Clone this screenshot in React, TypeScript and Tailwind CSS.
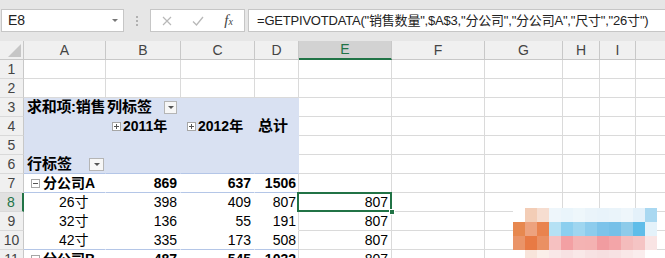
import type { ReactNode } from 'react';
import clsx from 'clsx';

const FONT = "font-['Liberation_Sans','Noto_Sans_CJK_SC',sans-serif]";

// column widths incl. right gridline: A..I + partial J
const W = ['w-[82px]', 'w-[75px]', 'w-[74px]', 'w-[44px]', 'w-[93px]', 'w-[93px]', 'w-[78px]', 'w-[37px]', 'w-[36px]', 'w-[40px]'];
const LETTERS = ['A', 'B', 'C', 'D', 'E', 'F', 'G', 'H', 'I', ''];

const grid = 'border-r-[#dadada] border-b-[#dadada]';
const pvHead = 'bg-[#d9e1f2] border-r-[#d9e1f2] border-b-[#d9e1f2]';
const pvHeadLine = 'bg-[#d9e1f2] border-r-[#d9e1f2] border-b-[#b4c6e7]';
const pvBody = 'border-r-white border-b-white';
const pvLine = 'border-r-white border-b-[#b4c6e7]';

function Cell({ i, tone = grid, className, children }: { i: number; tone?: string; className?: string; children?: ReactNode }) {
  return (
    <div className={clsx(W[i], 'h-full shrink-0 flex items-center overflow-hidden whitespace-nowrap border-r border-b', tone, className)}>
      {children}
    </div>
  );
}

function Row({ n, active, children }: { n: number; active?: boolean; children: ReactNode }) {
  return (
    <div className="flex h-[19px]">
      <div
        className={clsx(
          'w-[24px] shrink-0 flex items-center justify-center border-b border-b-[#d9d9d9] text-[14px]',
          active ? 'bg-[#e1e1e1] border-r-2 border-r-[#217346] text-[#217346]' : 'bg-[#f0f0f0] border-r border-r-[#c8c8c8] text-[#444]',
        )}
      >
        {n}
      </div>
      {children}
    </div>
  );
}

function Toggle({ open }: { open?: boolean }) {
  return (
    <svg width="9" height="9" viewBox="0 0 9 9" className="shrink-0">
      <rect x="0.5" y="0.5" width="8" height="8" fill="#fff" stroke="#a6a6a6" />
      <line x1="2" y1="4.5" x2="7" y2="4.5" stroke="#555" />
      {!open && <line x1="4.5" y1="2" x2="4.5" y2="7" stroke="#555" />}
    </svg>
  );
}

function DropBtn({ className }: { className?: string }) {
  return (
    <div className={clsx('h-[13px] shrink-0 bg-[#f7f7f7] border border-[#b5b5b5] flex items-center justify-center', className)}>
      <span className="w-0 h-0 border-l-[3px] border-r-[3px] border-t-[3px] border-l-transparent border-r-transparent border-t-[#555]" />
    </div>
  );
}

function Empty({ from = 4 }: { from?: number }) {
  return (
    <>
      {W.slice(from).map((_, k) => (
        <Cell key={k} i={from + k} />
      ))}
    </>
  );
}

const MOSAIC = [
  ['#ffffff', '#f3cdb6', '#f6ddd0', '#eef6fb', '#eaf5fb', '#eef7fb', '#eaf4fa', '#e8f3fa', '#eaf4fa', '#eef6fb', '#e4f1fa', '#a9d8f1'],
  ['#e7884f', '#eda27e', '#e9834e', '#b5e1f4', '#8ccfef', '#9fd6f0', '#8dcced', '#7cc3ea', '#76c0e8', '#8dcbea', '#5fbde9', '#e4f2fa'],
  ['#ea9468', '#e87a44', '#ea9063', '#f6c1c1', '#f3a0a3', '#f4b3b3', '#f4b2b2', '#f19ca0', '#f3a5a8', '#f4bcbc', '#f5c4c4', '#f9e4e4'],
  ['#ffffff', '#f8e4da', '#fbefe9', '#f9e8e8', '#f7e2e3', '#f9e8e8', '#f7e2e3', '#f6dfe0', '#f7e2e3', '#f9e8e8', '#faeded', '#ffffff'],
];

export default function App() {
  return (
    <div className={clsx('relative w-[665px] h-[258px] overflow-hidden bg-white text-black', FONT)}>
      {/* name box + formula bar */}
      <div className="h-[41px] bg-[#e6e6e6] flex items-start pt-[9px] pl-[1px]">
        <div className="w-[123px] h-[23px] shrink-0 bg-white border border-[#c6c6c6] flex items-center pl-[6px] pr-[5px] text-[14px] text-[#222]">
          <span>E8</span>
          <span className="ml-auto w-0 h-0 border-l-[3px] border-r-[3px] border-t-[3px] border-l-transparent border-r-transparent border-t-[#777]" />
        </div>
        <div className="w-[26px] shrink-0 flex flex-col items-center gap-[2px] pt-[7px]">
          <span className="w-[2px] h-[2px] bg-[#b0b0b0]" />
          <span className="w-[2px] h-[2px] bg-[#b0b0b0]" />
          <span className="w-[2px] h-[2px] bg-[#b0b0b0]" />
        </div>
        <div className="w-[95px] h-[23px] shrink-0 bg-white border border-[#c6c6c6] flex items-center pl-[1px]">
          <div className="w-[31px] flex justify-center">
            <svg width="10" height="10" viewBox="0 0 10 10">
              <path d="M1 1L9 9M9 1L1 9" stroke="#b8b8b8" strokeWidth="1.2" />
            </svg>
          </div>
          <div className="w-[31px] flex justify-center">
            <svg width="12" height="10" viewBox="0 0 12 10">
              <path d="M1 5.5L4.5 9L11 1" stroke="#b8b8b8" strokeWidth="1.3" fill="none" />
            </svg>
          </div>
          <div className="w-[31px] flex justify-center">
            <span className="italic font-['Liberation_Serif',serif] text-[15px] text-[#444] leading-none">
              f<span className="text-[10px]">x</span>
            </span>
          </div>
        </div>
        <div className="ml-[3px] flex-1 h-[23px] bg-white border border-r-0 border-[#c6c6c6] flex items-center pl-[8px] text-[13px] tracking-[-0.2px] text-[#222] whitespace-nowrap overflow-hidden">
          =GETPIVOTDATA("销售数量",$A$3,"分公司","分公司A","尺寸","26寸")
        </div>
      </div>

      {/* column headers */}
      <div className="flex h-[19px] bg-[#f0f0f0] text-[14px] text-[#444]">
        <div className="w-[24px] shrink-0 relative border-r border-b border-[#c8c8c8]">
          <svg width="13" height="13" viewBox="0 0 13 13" className="absolute right-[2px] bottom-[2px]">
            <path d="M13 0V13H0Z" fill="#c6c6c6" />
          </svg>
        </div>
        {LETTERS.map((l, i) => (
          <div
            key={i}
            className={clsx(
              W[i],
              'shrink-0 flex items-center justify-center border-r border-r-[#c8c8c8]',
              l === 'E' ? 'bg-[#d2d2d2] border-b-2 border-b-[#217346] text-[#217346]' : 'border-b border-b-[#c8c8c8]',
            )}
          >
            {l}
          </div>
        ))}
      </div>

      {/* sheet rows */}
      <div className="text-[14px]">
        <Row n={1}>
          <Empty from={0} />
        </Row>
        <Row n={2}>
          <Empty from={0} />
        </Row>
        <Row n={3}>
          <Cell i={0} tone={pvHead} className="pl-[3px] font-bold text-[15px] tracking-[-0.3px]">求和项:销售</Cell>
          <Cell i={1} tone={pvHead} className="pl-[1px] font-bold text-[15px]">
            <span>列标签</span>
            <DropBtn className="ml-auto mr-[3px] w-[13px]" />
          </Cell>
          <Cell i={2} tone={pvHead} />
          <Cell i={3} tone={pvHead} />
          <Empty />
        </Row>
        <Row n={4}>
          <Cell i={0} tone={pvHead} />
          <Cell i={1} tone={pvHead} className="pl-[6px] gap-[2px] font-bold">
            <Toggle />
            <span>2011年</span>
          </Cell>
          <Cell i={2} tone={pvHead} className="pl-[6px] gap-[2px] font-bold">
            <Toggle />
            <span>2012年</span>
          </Cell>
          <Cell i={3} tone={pvHead} className="pl-[3px] font-bold text-[15px]">总计</Cell>
          <Empty />
        </Row>
        <Row n={5}>
          <Cell i={0} tone={pvHead} />
          <Cell i={1} tone={pvHead} />
          <Cell i={2} tone={pvHead} />
          <Cell i={3} tone={pvHead} />
          <Empty />
        </Row>
        <Row n={6}>
          <Cell i={0} tone={pvHeadLine} className="pl-[3px] font-bold text-[15px]">
            <span>行标签</span>
            <DropBtn className="ml-auto mr-[1px] w-[15px]" />
          </Cell>
          <Cell i={1} tone={pvHeadLine} />
          <Cell i={2} tone={pvHeadLine} />
          <Cell i={3} tone={pvHeadLine} />
          <Empty />
        </Row>
        <Row n={7}>
          <Cell i={0} tone={pvLine} className="pl-[7px] gap-[3px] font-bold">
            <Toggle open />
            <span>分公司A</span>
          </Cell>
          <Cell i={1} tone={pvLine} className="justify-end pr-[3px] font-bold">869</Cell>
          <Cell i={2} tone={pvLine} className="justify-end pr-[3px] font-bold">637</Cell>
          <Cell i={3} tone="border-r-[#dadada] border-b-[#b4c6e7]" className="justify-end pr-[2px] font-bold">1506</Cell>
          <Empty />
        </Row>
        <Row n={8} active>
          <Cell i={0} tone={pvBody} className="pl-[35px]">26寸</Cell>
          <Cell i={1} tone={pvBody} className="justify-end pr-[3px]">398</Cell>
          <Cell i={2} tone={pvBody} className="justify-end pr-[3px]">409</Cell>
          <Cell i={3} tone="border-r-[#dadada] border-b-white" className="justify-end pr-[2px]">807</Cell>
          <Cell i={4} className="relative justify-end pr-[3px] overflow-visible">
            807
            <div className="absolute -left-[2px] -top-[1px] -right-[1px] -bottom-[1px] border-2 border-[#217346]" />
            <div className="absolute -right-[4px] -bottom-[4px] w-[6px] h-[6px] bg-[#217346] border border-white" />
          </Cell>
          <Empty from={5} />
        </Row>
        <Row n={9}>
          <Cell i={0} tone={pvBody} className="pl-[35px]">32寸</Cell>
          <Cell i={1} tone={pvBody} className="justify-end pr-[3px]">136</Cell>
          <Cell i={2} tone={pvBody} className="justify-end pr-[3px]">55</Cell>
          <Cell i={3} tone="border-r-[#dadada] border-b-white" className="justify-end pr-[2px]">191</Cell>
          <Cell i={4} className="justify-end pr-[3px]">807</Cell>
          <Empty from={5} />
        </Row>
        <Row n={10}>
          <Cell i={0} tone={pvLine} className="pl-[35px]">42寸</Cell>
          <Cell i={1} tone={pvLine} className="justify-end pr-[3px]">335</Cell>
          <Cell i={2} tone={pvLine} className="justify-end pr-[3px]">173</Cell>
          <Cell i={3} tone="border-r-[#dadada] border-b-[#b4c6e7]" className="justify-end pr-[2px]">508</Cell>
          <Cell i={4} className="justify-end pr-[3px]">807</Cell>
          <Empty from={5} />
        </Row>
        <Row n={11}>
          <Cell i={0} tone={pvLine} className="pl-[7px] gap-[3px] font-bold">
            <Toggle open />
            <span>分公司B</span>
          </Cell>
          <Cell i={1} tone={pvLine} className="justify-end pr-[3px] font-bold">487</Cell>
          <Cell i={2} tone={pvLine} className="justify-end pr-[3px] font-bold">545</Cell>
          <Cell i={3} tone="border-r-[#dadada] border-b-[#b4c6e7]" className="justify-end pr-[2px] font-bold">1032</Cell>
          <Cell i={4} className="justify-end pr-[3px]">807</Cell>
          <Empty from={5} />
        </Row>
      </div>

      {/* pixelated watermark over the sheet */}
      <div className="absolute left-[513px] top-[208px] flex flex-col">
        {MOSAIC.map((row, r) => (
          <div key={r} className="flex">
            {row.map((c, k) => (
              <div key={k} className="w-[12px] h-[14px]" style={{ backgroundColor: c }} />
            ))}
          </div>
        ))}
      </div>
    </div>
  );
}
